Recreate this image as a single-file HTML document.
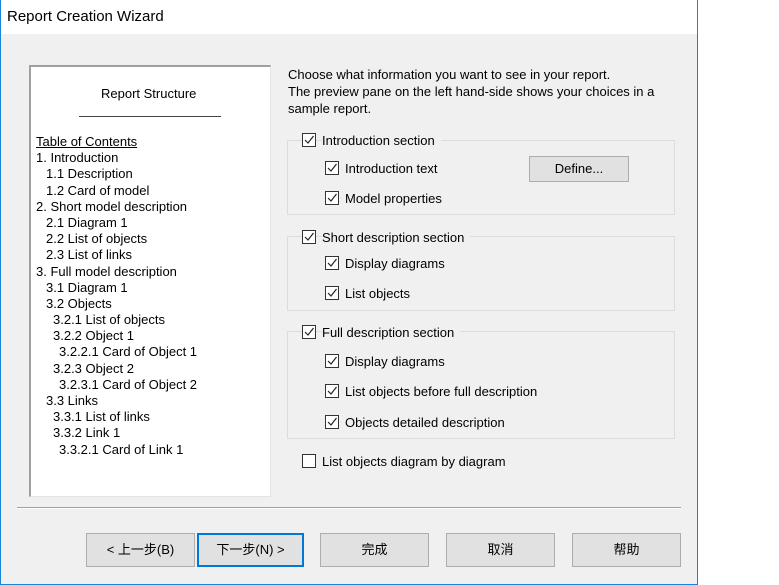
<!DOCTYPE html>
<html><head><meta charset="utf-8"><style>
*{box-sizing:border-box}
body{margin:0;width:779px;height:585px;background:#fff;position:relative;overflow:hidden;font-family:"Liberation Sans","Noto Sans CJK SC",sans-serif;font-size:13px;color:#000}
.a{position:absolute;white-space:nowrap}
#win{position:absolute;left:0;top:0;width:698px;height:585px;border:1px solid #1883d7;border-top:none;background:#f0f0f0}
#title{position:absolute;left:0;top:0;width:696px;height:34px;background:#fff}
.cb{position:absolute;width:14px;height:14px;border:1px solid #333;background:#fff}
.cb svg{position:absolute;left:1px;top:1px}
.grp{position:absolute;border:1px solid #dcdcdc}
.btn{position:absolute;height:34px;border:1px solid #adadad;background:#e1e1e1;text-align:center;line-height:32px}
.lp{position:absolute;font-size:13px;line-height:16.2px;white-space:nowrap}
.lp div{height:16.2px}
</style></head><body>
<div id="win">
<div id="title"><span class="a" style="left:6px;top:8px;font-size:15px">Report Creation Wizard</span></div>
<div style="position:absolute;left:28px;top:65px;width:242px;height:432px;background:#fff;border-left:2px solid #a0a0a0;border-top:2px solid #a0a0a0;border-right:1px solid #e3e3e3;border-bottom:1px solid #e3e3e3"></div>
<span class="a" style="left:100px;top:86px;font-size:13px">Report Structure</span>
<div style="position:absolute;left:78px;top:116px;width:142px;height:1px;background:#444"></div>
<div class="lp" style="left:35px;top:134px">
<div><u>Table of Contents</u></div><div>1. Introduction</div><div style="padding-left:10px">1.1 Description</div><div style="padding-left:10px">1.2 Card of model</div><div>2. Short model description</div><div style="padding-left:10px">2.1 Diagram 1</div><div style="padding-left:10px">2.2 List of objects</div><div style="padding-left:10px">2.3 List of links</div><div>3. Full model description</div><div style="padding-left:10px">3.1 Diagram 1</div><div style="padding-left:10px">3.2 Objects</div><div style="padding-left:17px">3.2.1 List of objects</div><div style="padding-left:17px">3.2.2 Object 1</div><div style="padding-left:23px">3.2.2.1 Card of Object 1</div><div style="padding-left:17px">3.2.3 Object 2</div><div style="padding-left:23px">3.2.3.1 Card of Object 2</div><div style="padding-left:10px">3.3 Links</div><div style="padding-left:17px">3.3.1 List of links</div><div style="padding-left:17px">3.3.2 Link 1</div><div style="padding-left:23px">3.3.2.1 Card of Link 1</div>
</div>
<div class="a" style="left:287px;top:66px;line-height:17px">Choose what information you want to see in your report.<br>The preview pane on the left hand-side shows your choices in a<br>sample report.</div>

<div class="grp" style="left:286px;top:140px;width:388px;height:75px"></div>
<div class="grp" style="left:286px;top:236px;width:388px;height:75px"></div>
<div class="grp" style="left:286px;top:331px;width:388px;height:108px"></div>

<div id="items"></div>
<div class="btn" style="left:528px;top:156px;width:100px;height:26px;line-height:24px">Define...</div>

<div style="position:absolute;left:16px;top:507px;width:664px;height:2px;border-top:1px solid #a0a0a0;border-bottom:1px solid #fff"></div>
<div class="btn" style="left:85px;top:533px;width:109px">&lt; 上一步(B)</div>
<div class="btn" style="left:196px;top:533px;width:107px;border:2px solid #0078d7;line-height:30px">下一步(N) &gt;</div>
<div class="btn" style="left:319px;top:533px;width:109px">完成</div>
<div class="btn" style="left:445px;top:533px;width:109px">取消</div>
<div class="btn" style="left:571px;top:533px;width:109px">帮助</div>
</div>
<script>
var items=[[301,133,"Introduction section",1,1],[324,161,"Introduction text",1],[324,191,"Model properties",1],
[301,230,"Short description section",1,1],[324,256,"Display diagrams",1],[324,286,"List objects",1],
[301,325,"Full description section",1,1],[324,354,"Display diagrams",1],[324,384,"List objects before full description",1],[324,415,"Objects detailed description",1],
[301,454,"List objects diagram by diagram",0]];
var h="";
items.forEach(function(it){
var ck=it[3]?'<svg width="10" height="10" viewBox="0 0 10 10"><path d="M1 5 L4 8 L9.5 1" fill="none" stroke="#222" stroke-width="1.2"/></svg>':'';
h+='<div class="cb" style="left:'+it[0]+'px;top:'+it[1]+'px">'+ck+'</div>';
h+='<span class="a" style="left:'+(it[0]+20)+'px;top:'+(it[1])+'px;'+(it[4]?'background:#f0f0f0;padding-right:6px;':'')+'">'+it[2]+'</span>';
});
document.getElementById('items').innerHTML=h;
</script>
</body></html>
